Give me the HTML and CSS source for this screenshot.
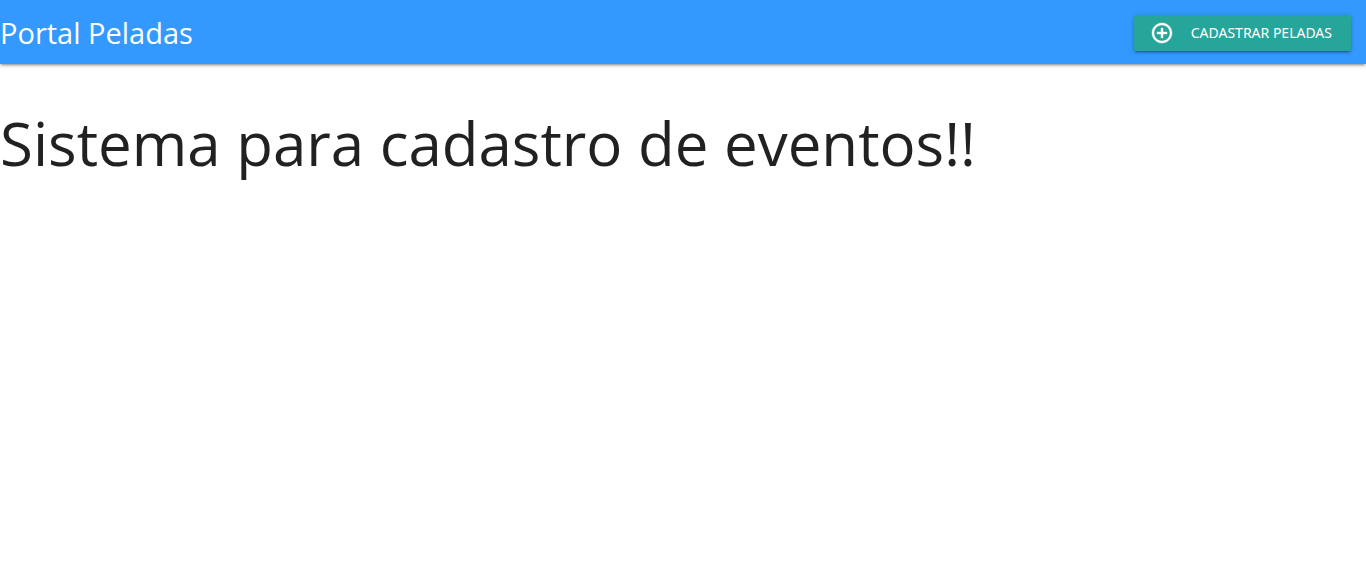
FILE: index.html
```html
<!DOCTYPE html>
<html lang="pt-BR">
<head>
<meta charset="utf-8">
<meta name="viewport" content="width=device-width, initial-scale=1">
<title>Portal Peladas</title>
<link rel="stylesheet" href="styles.css">
</head>
<body>
<nav class="navbar">
  <a class="brand" href="#">Portal Peladas</a>
  <a class="btn" href="#cadastrar">
    <svg class="btn-icon" viewBox="0 0 24 24" stroke="currentColor" stroke-width="0.4" aria-hidden="true"><path d="M13 7h-2v4H7v2h4v4h2v-4h4v-2h-4V7zm-1-5C6.480 2 2 6.480 2 12s4.480 10 10 10 10-4.480 10-10S17.520 2 12 2zm0 18c-4.410 0-8-3.590-8-8s3.590-8 8-8 8 3.590 8 8-3.590 8-8 8z"/></svg>
    <span>Cadastrar Peladas</span>
  </a>
</nav>
<main>
  <h1 class="title">Sistema para cadastro de eventos!!</h1>
</main>
</body>
</html>
```
FILE: styles.css
```css
* {
  box-sizing: border-box;
}

body {
  margin: 0;
  background: #fff;
  color: rgba(0, 0, 0, 0.87);
  font-family: "Segoe UI", "Open Sans", "Noto Sans", sans-serif;
  font-size: 15px;
  line-height: 1.5;
}

.navbar {
  display: flex;
  align-items: center;
  justify-content: space-between;
  height: 64px;
  padding: 2px 15px 0 0;
  background: #3399ff;
  box-shadow: 0 2px 2px 0 rgba(0, 0, 0, 0.14), 0 3px 1px -2px rgba(0, 0, 0, 0.12), 0 1px 5px 0 rgba(0, 0, 0, 0.2);
}

.brand {
  color: #fff;
  font-size: 29px;
  line-height: 40px;
  text-decoration: none;
}

.btn {
  display: flex;
  align-items: center;
  gap: 17px;
  height: 36px;
  padding: 0 19px 0 16px;
  border-radius: 2px;
  background: #26a69a;
  box-shadow: 0 2px 2px 0 rgba(0, 0, 0, 0.14), 0 3px 1px -2px rgba(0, 0, 0, 0.12), 0 1px 5px 0 rgba(0, 0, 0, 0.2);
  color: #fff;
  font-family: "Noto Sans", "Open Sans", sans-serif;
  font-size: 14px;
  line-height: 36px;
  text-decoration: none;
  text-transform: uppercase;
}

.btn-icon {
  width: 24px;
  height: 24px;
  fill: currentColor;
}

.title {
  margin: 44px 0 25px;
  font-size: 60px;
  font-weight: 400;
  line-height: 70px;
}
```
